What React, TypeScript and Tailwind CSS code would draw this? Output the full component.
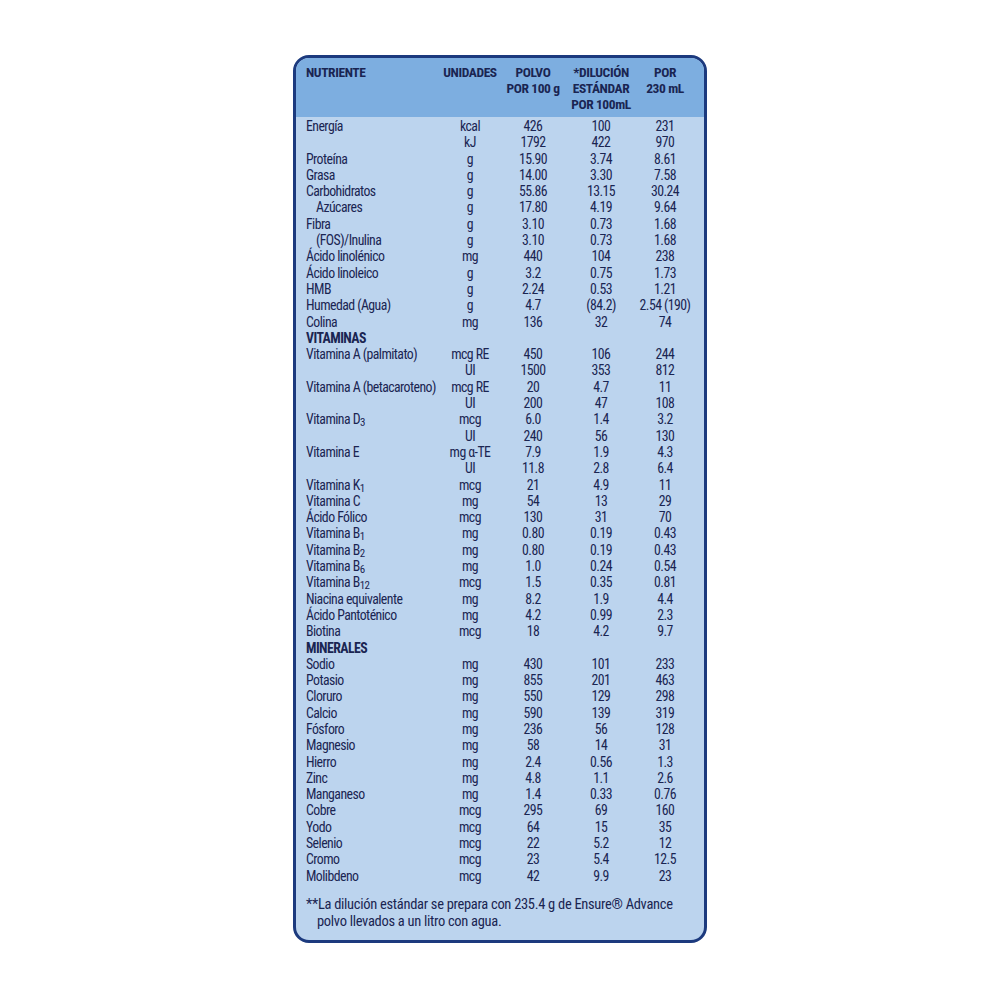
import React from "react";

type Row = {
  name?: React.ReactNode;
  unit?: React.ReactNode;
  a?: string;
  b?: string;
  c?: string;
  section?: boolean;
  indent?: boolean;
};

const Sub = ({ children }: { children: React.ReactNode }) => (
  <span className="relative top-[2px] text-[11px] leading-none">{children}</span>
);

const rows: Row[] = [
  { name: "Energía", unit: "kcal", a: "426", b: "100", c: "231" },
  { unit: "kJ", a: "1792", b: "422", c: "970" },
  { name: "Proteína", unit: "g", a: "15.90", b: "3.74", c: "8.61" },
  { name: "Grasa", unit: "g", a: "14.00", b: "3.30", c: "7.58" },
  { name: "Carbohidratos", unit: "g", a: "55.86", b: "13.15", c: "30.24" },
  { name: "Azúcares", indent: true, unit: "g", a: "17.80", b: "4.19", c: "9.64" },
  { name: "Fibra", unit: "g", a: "3.10", b: "0.73", c: "1.68" },
  { name: "(FOS)/Inulina", indent: true, unit: "g", a: "3.10", b: "0.73", c: "1.68" },
  { name: "Ácido linolénico", unit: "mg", a: "440", b: "104", c: "238" },
  { name: "Ácido linoleico", unit: "g", a: "3.2", b: "0.75", c: "1.73" },
  { name: "HMB", unit: "g", a: "2.24", b: "0.53", c: "1.21" },
  { name: "Humedad (Agua)", unit: "g", a: "4.7", b: "(84.2)", c: "2.54 (190)" },
  { name: "Colina", unit: "mg", a: "136", b: "32", c: "74" },
  { name: "VITAMINAS", section: true },
  { name: "Vitamina A (palmitato)", unit: "mcg RE", a: "450", b: "106", c: "244" },
  { unit: "UI", a: "1500", b: "353", c: "812" },
  { name: "Vitamina A (betacaroteno)", unit: "mcg RE", a: "20", b: "4.7", c: "11" },
  { unit: "UI", a: "200", b: "47", c: "108" },
  { name: <>Vitamina D<Sub>3</Sub></>, unit: "mcg", a: "6.0", b: "1.4", c: "3.2" },
  { unit: "UI", a: "240", b: "56", c: "130" },
  { name: "Vitamina E", unit: "mg α-TE", a: "7.9", b: "1.9", c: "4.3" },
  { unit: "UI", a: "11.8", b: "2.8", c: "6.4" },
  { name: <>Vitamina K<Sub>1</Sub></>, unit: "mcg", a: "21", b: "4.9", c: "11" },
  { name: "Vitamina C", unit: "mg", a: "54", b: "13", c: "29" },
  { name: "Ácido Fólico", unit: "mcg", a: "130", b: "31", c: "70" },
  { name: <>Vitamina B<Sub>1</Sub></>, unit: "mg", a: "0.80", b: "0.19", c: "0.43" },
  { name: <>Vitamina B<Sub>2</Sub></>, unit: "mg", a: "0.80", b: "0.19", c: "0.43" },
  { name: <>Vitamina B<Sub>6</Sub></>, unit: "mg", a: "1.0", b: "0.24", c: "0.54" },
  { name: <>Vitamina B<Sub>12</Sub></>, unit: "mcg", a: "1.5", b: "0.35", c: "0.81" },
  { name: "Niacina equivalente", unit: "mg", a: "8.2", b: "1.9", c: "4.4" },
  { name: "Ácido Pantoténico", unit: "mg", a: "4.2", b: "0.99", c: "2.3" },
  { name: "Biotina", unit: "mcg", a: "18", b: "4.2", c: "9.7" },
  { name: "MINERALES", section: true },
  { name: "Sodio", unit: "mg", a: "430", b: "101", c: "233" },
  { name: "Potasio", unit: "mg", a: "855", b: "201", c: "463" },
  { name: "Cloruro", unit: "mg", a: "550", b: "129", c: "298" },
  { name: "Calcio", unit: "mg", a: "590", b: "139", c: "319" },
  { name: "Fósforo", unit: "mg", a: "236", b: "56", c: "128" },
  { name: "Magnesio", unit: "mg", a: "58", b: "14", c: "31" },
  { name: "Hierro", unit: "mg", a: "2.4", b: "0.56", c: "1.3" },
  { name: "Zinc", unit: "mg", a: "4.8", b: "1.1", c: "2.6" },
  { name: "Manganeso", unit: "mg", a: "1.4", b: "0.33", c: "0.76" },
  { name: "Cobre", unit: "mcg", a: "295", b: "69", c: "160" },
  { name: "Yodo", unit: "mcg", a: "64", b: "15", c: "35" },
  { name: "Selenio", unit: "mcg", a: "22", b: "5.2", c: "12" },
  { name: "Cromo", unit: "mcg", a: "23", b: "5.4", c: "12.5" },
  { name: "Molibdeno", unit: "mcg", a: "42", b: "9.9", c: "23" },
];

const cols = "grid grid-cols-[134px_60px_66px_70px_58px]";

export default function App() {
  return (
    <div className="min-h-[1000px] w-full bg-white pt-[55px] font-['Roboto_Condensed','Liberation_Sans',sans-serif] text-[#1a2552]">
      <div className="mx-auto w-[414px] overflow-hidden rounded-[16px] border-[3px] border-[#1c3a7e] bg-[#bcd4ee]">
        <div className={`${cols} bg-[#7daee0] pl-[10px] pt-[6px] pb-[5px] text-[13.5px] font-bold leading-[16px] tracking-[-0.4px]`}>
          <div>NUTRIENTE</div>
          <div className="whitespace-nowrap text-center">UNIDADES</div>
          <div className="whitespace-nowrap text-center">
            POLVO
            <br />
            POR 100 g
          </div>
          <div className="whitespace-nowrap text-center">
            *DILUCIÓN
            <br />
            ESTÁNDAR
            <br />
            POR 100mL
          </div>
          <div className="whitespace-nowrap text-center">
            POR
            <br />
            230 mL
          </div>
        </div>

        <div className="pl-[10px] pt-[1px] text-[13.8px] leading-[16.3px] tracking-[-0.55px]">
          {rows.map((r, i) =>
            r.section ? (
              <div key={i} className="h-[16.3px] font-bold">
                {r.name}
              </div>
            ) : (
              <div key={i} className={`${cols} h-[16.3px]`}>
                <div className={`whitespace-nowrap ${r.indent ? "pl-[10px]" : ""}`}>{r.name}</div>
                <div className="whitespace-nowrap text-center">{r.unit}</div>
                <div className="text-center">{r.a}</div>
                <div className="text-center">{r.b}</div>
                <div className="whitespace-nowrap text-center">{r.c}</div>
              </div>
            )
          )}
        </div>

        <div className="pl-[10px] pr-[4px] pt-[12px] pb-[10px] text-[14.5px] leading-[17px] tracking-[-0.3px]">
          <div className="whitespace-nowrap">**La dilución estándar se prepara con 235.4 g de Ensure® Advance</div>
          <div className="pl-[11px]">polvo llevados a un litro con agua.</div>
        </div>
      </div>
    </div>
  );
}
